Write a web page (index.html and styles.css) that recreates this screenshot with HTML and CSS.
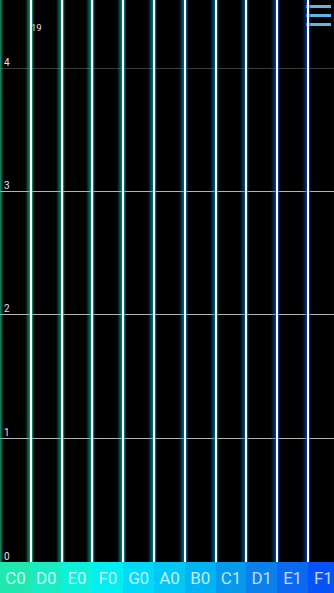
FILE: index.html
```html
<!DOCTYPE html>
<html>
<head>
<meta charset="utf-8">
<link rel="stylesheet" href="styles.css">
</head>
<body>
<div class="app">
  <div class="chart">
    <div class="rows">
      <div class="row row-top">
        <span class="tag">19</span>
        <span class="lbl">4</span>
      </div>
      <div class="row row-mid"><span class="lbl">3</span></div>
      <div class="row row-mid"><span class="lbl">2</span></div>
      <div class="row row-mid r4"><span class="lbl">1</span></div>
      <div class="row row-last"><span class="lbl">0</span></div>
    </div>
    <div class="menu">
      <span class="bar"></span><span class="bar"></span><span class="bar"></span>
    </div>
    <div class="cols">
      <div class="col c1"></div><div class="col c2"></div><div class="col c3"></div>
      <div class="col c4"></div><div class="col c5"></div><div class="col c6"></div>
      <div class="col c7"></div><div class="col c8"></div><div class="col c9"></div>
      <div class="col c10"></div><div class="col c11"></div>
    </div>
  </div>
  <div class="keys">
    <div class="key c1">C0</div><div class="key c2">D0</div><div class="key c3">E0</div>
    <div class="key c4">F0</div><div class="key c5">G0</div><div class="key c6">A0</div>
    <div class="key c7">B0</div><div class="key c8">C1</div><div class="key c9">D1</div>
    <div class="key c10">E1</div><div class="key c11">F1</div>
  </div>
</div>
</body>
</html>
```
FILE: styles.css
```css
html, body {
  margin: 0;
  padding: 0;
  background: #000;
  width: 334px;
  height: 593px;
  overflow: hidden;
}
.app {
  width: 334px;
  height: 593px;
  display: flex;
  flex-direction: column;
  font-family: Roboto, "Liberation Sans", sans-serif;
}
.chart {
  height: 562px;
  display: grid;
  grid-template-columns: 334px;
  grid-template-rows: 562px;
}
.rows, .menu, .cols {
  grid-area: 1 / 1;
}
.rows {
  display: flex;
  flex-direction: column;
}
.row {
  display: flex;
  flex-direction: column;
  justify-content: flex-end;
  box-sizing: border-box;
}
.row-top {
  height: 69px;
  border-bottom: 1px solid #3a3a3a;
  justify-content: space-between;
}
.row-mid {
  height: 123px;
  border-bottom: 1px solid #b4b4b4;
}
.r4 { height: 124px; }
.row-last { height: 123px; }
.lbl, .tag {
  font-size: 10px;
  line-height: 10px;
  color: #e0e0e0;
  padding-left: 4px;
  padding-bottom: 0;
}
.tag {
  padding-left: 31px;
  padding-top: 23px;
  font-size: 9.5px;
}
.menu {
  justify-self: end;
  align-self: start;
  margin: 5px 3px 0 0;
  display: flex;
  flex-direction: column;
  gap: 6px;
}
.bar {
  display: block;
  width: 25px;
  height: 3px;
  background: #5fb6e6;
}
.cols {
  width: 339px;
  display: grid;
  grid-template-columns: repeat(11, 30.8px);
}
.col {
  background: linear-gradient(to right,
    #fff 0, #fff 1.3px,
    var(--g) 1.3px, transparent 3px,
    transparent calc(100% - 6px),
    var(--g) calc(100% - 0.7px),
    #fff calc(100% - 0.7px), #fff 100%);
}
.col.c1 {
  background: linear-gradient(to right,
    var(--g) 0, transparent 3.5px,
    transparent calc(100% - 6px),
    var(--g) calc(100% - 0.7px),
    #fff calc(100% - 0.7px), #fff 100%);
}
.c1 { --k: #1fe9b0; --g: rgba(31, 210, 160, 0.7); }
.c2 { --k: #19ecc3; --g: rgba(25, 210, 175, 0.65); }
.c3 { --k: #10efd8; --g: rgba(16, 210, 195, 0.65); }
.c4 { --k: #02eef0; --g: rgba(2, 205, 215, 0.65); }
.c5 { --k: #00d9f7; --g: rgba(0, 185, 220, 0.65); }
.c6 { --k: #00c7f6; --g: rgba(0, 165, 220, 0.65); }
.c7 { --k: #00b3f3; --g: rgba(0, 145, 220, 0.65); }
.c8 { --k: #079aec; --g: rgba(7, 125, 220, 0.65); }
.c9 { --k: #0a80ec; --g: rgba(10, 105, 220, 0.65); }
.c10 { --k: #0a68f1; --g: rgba(10, 85, 230, 0.65); }
.c11 { --k: #0552fb; --g: rgba(5, 70, 240, 0.65); }
.keys {
  width: 339px;
  height: 31px;
  display: grid;
  grid-template-columns: repeat(11, 30.8px);
}
.key {
  background: var(--k);
  display: flex;
  align-items: center;
  justify-content: center;
  font-size: 17px;
  color: rgba(255, 255, 255, 0.75);
  letter-spacing: -0.2px;
}
```
